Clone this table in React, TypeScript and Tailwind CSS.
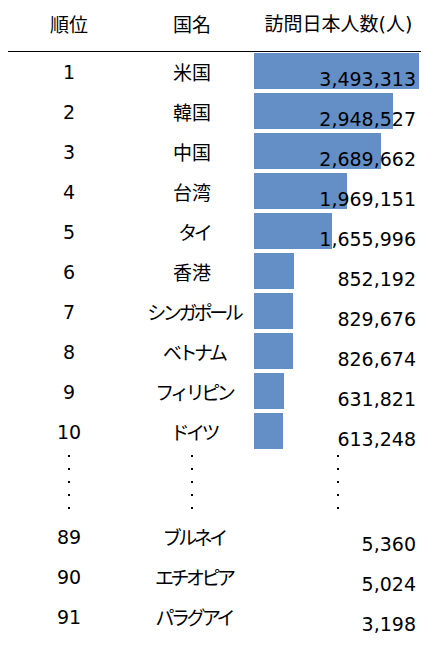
import React from "react";

const MAX = 3493313;
const BAR_MAX = 165;

const top: [number, string, number][] = [
  [1, "米国", 3493313],
  [2, "韓国", 2948527],
  [3, "中国", 2689662],
  [4, "台湾", 1969151],
  [5, "タイ", 1655996],
  [6, "香港", 852192],
  [7, "シンガポール", 829676],
  [8, "ベトナム", 826674],
  [9, "フィリピン", 631821],
  [10, "ドイツ", 613248],
];

const tail: [number, string, number][] = [
  [89, "ブルネイ", 5360],
  [90, "エチオピア", 5024],
  [91, "パラグアイ", 3198],
];

const fmt = (n: number) => n.toLocaleString("en-US");
const isKana = (s: string) => /[\u30A0-\u30FF]/.test(s);

function Row({ rank, name, value }: { rank: number; name: string; value: number }) {
  const w = Math.round((value / MAX) * BAR_MAX);
  return (
    <div className="grid grid-cols-[122px_124px_167px] h-[40px]">
      <div className="flex items-center justify-center text-[19px] font-['DejaVu_Sans',sans-serif]">
        {rank}
      </div>
      <div className="flex items-center justify-center text-[19px] font-['Noto_Sans_CJK_JP',sans-serif]">
        {isKana(name) ? (
          <span className="tracking-[-3.5px] mr-[-3.5px]">{name}</span>
        ) : (
          <span>{name}</span>
        )}
      </div>
      <div className="pt-[1px]">
        <div
          className="h-[36px] flex items-end justify-end pr-[5px] bg-no-repeat"
          style={{
            backgroundImage: w > 0 ? "linear-gradient(#638EC6, #638EC6)" : "none",
            backgroundSize: `${w}px 100%`,
          }}
        >
          <span className="text-[19px] leading-[19px] font-['DejaVu_Sans',sans-serif]">{fmt(value)}</span>
        </div>
      </div>
    </div>
  );
}

function Dots() {
  return (
    <div className="flex flex-col items-center gap-[11px] pt-[3px]">
      {[0, 1, 2, 3, 4].map((i) => (
        <div key={i} className="w-[2px] h-[2px] bg-black" />
      ))}
    </div>
  );
}

export default function App() {
  return (
    <div className="w-[434px] h-[659px] bg-white text-black pl-[8px]">
      <div className="w-[413px]">
        <div className="grid grid-cols-[122px_124px_167px] h-[52px] border-b border-black items-center text-[19px] font-['Noto_Sans_CJK_JP',sans-serif] pb-[3px]">
          <div className="text-center">順位</div>
          <div className="text-center">国名</div>
          <div className="text-center font-['DejaVu_Sans','Noto_Sans_CJK_JP',sans-serif] text-[19px] pl-[2px]">
            <span className="font-['Noto_Sans_CJK_JP',sans-serif]">訪問日本人数</span>
            <span>(</span>
            <span className="font-['Noto_Sans_CJK_JP',sans-serif]">人</span>
            <span>)</span>
          </div>
        </div>
        {top.map(([r, n, v]) => (
          <Row key={r} rank={r} name={n} value={v} />
        ))}
        <div className="grid grid-cols-[122px_124px_167px] h-[65px]">
          <Dots />
          <Dots />
          <Dots />
        </div>
        {tail.map(([r, n, v]) => (
          <Row key={r} rank={r} name={n} value={v} />
        ))}
      </div>
    </div>
  );
}
